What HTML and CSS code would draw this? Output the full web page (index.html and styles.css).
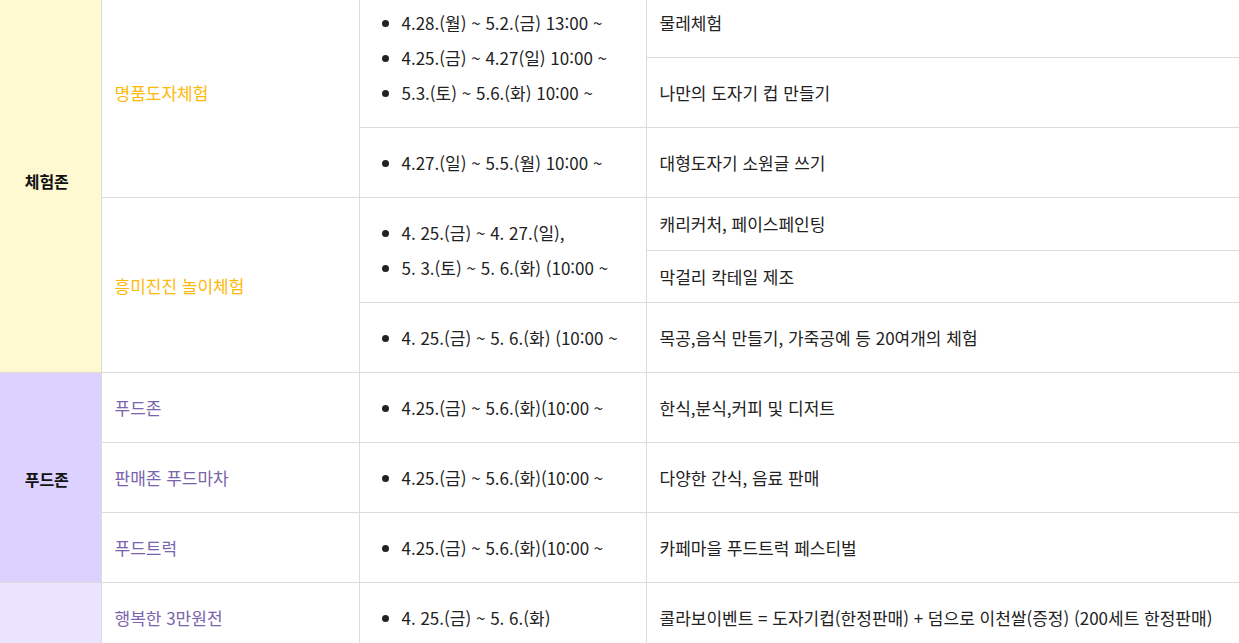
FILE: index.html
```html
<!DOCTYPE html>
<html lang="ko">
<head>
<meta charset="utf-8">
<link rel="stylesheet" href="styles.css">
</head>
<body>
<table class="sched">
  <colgroup>
    <col class="c1"><col class="c2"><col class="c3"><col class="c4">
  </colgroup>
  <tbody>
    <tr>
      <th rowspan="6" class="zone zone-exp">체험존</th>
      <td rowspan="3" class="prog prog-exp">명품도자체험</td>
      <td rowspan="2" class="dates"><ul><li>4.28.(월) ~ 5.2.(금) 13:00 ~</li><li>4.25.(금) ~ 4.27(일) 10:00 ~</li><li>5.3.(토) ~ 5.6.(화) 10:00 ~</li></ul></td>
      <td class="desc">물레체험</td>
    </tr>
    <tr><td class="desc">나만의 도자기 컵 만들기</td></tr>
    <tr>
      <td class="dates"><ul><li>4.27.(일) ~ 5.5.(월) 10:00 ~</li></ul></td>
      <td class="desc">대형도자기 소원글 쓰기</td>
    </tr>
    <tr>
      <td rowspan="3" class="prog prog-exp">흥미진진 놀이체험</td>
      <td rowspan="2" class="dates"><ul><li>4. 25.(금) ~ 4. 27.(일),</li><li>5. 3.(토) ~ 5. 6.(화) (10:00 ~</li></ul></td>
      <td class="desc">캐리커처, 페이스페인팅</td>
    </tr>
    <tr><td class="desc">막걸리 칵테일 제조</td></tr>
    <tr>
      <td class="dates"><ul><li>4. 25.(금) ~ 5. 6.(화) (10:00 ~</li></ul></td>
      <td class="desc">목공,음식 만들기, 가죽공예 등 20여개의 체험</td>
    </tr>
    <tr>
      <th rowspan="3" class="zone zone-food">푸드존</th>
      <td class="prog prog-food">푸드존</td>
      <td class="dates"><ul><li>4.25.(금) ~ 5.6.(화)(10:00 ~</li></ul></td>
      <td class="desc">한식,분식,커피 및 디저트</td>
    </tr>
    <tr>
      <td class="prog prog-food">판매존 푸드마차</td>
      <td class="dates"><ul><li>4.25.(금) ~ 5.6.(화)(10:00 ~</li></ul></td>
      <td class="desc">다양한 간식, 음료 판매</td>
    </tr>
    <tr>
      <td class="prog prog-food">푸드트럭</td>
      <td class="dates"><ul><li>4.25.(금) ~ 5.6.(화)(10:00 ~</li></ul></td>
      <td class="desc">카페마을 푸드트럭 페스티벌</td>
    </tr>
    <tr>
      <th class="zone zone-event"></th>
      <td class="prog prog-food">행복한 3만원전</td>
      <td class="dates"><ul><li>4. 25.(금) ~ 5. 6.(화)</li></ul></td>
      <td class="desc">콜라보이벤트 = 도자기컵(한정판매) + 덤으로 이천쌀(증정) (200세트 한정판매)</td>
    </tr>
  </tbody>
</table>
</body>
</html>
```

FILE: styles.css
```css
html, body {
  margin: 0;
  padding: 0;
  background: #fff;
}
body {
  font-family: "Noto Sans CJK KR", "Noto Sans", sans-serif;
  color: #222;
  overflow: hidden;
}
.sched {
  border-collapse: collapse;
  width: 1240px;
  margin-top: -13px;
  table-layout: fixed;
  font-size: 17px;
}
.c1 { width: 101px; }
.c2 { width: 258px; }
.c3 { width: 287px; }
.c4 { width: 594px; }
.sched th, .sched td {
  border: 1px solid #dcdcdc;
  vertical-align: middle;
  text-align: left;
}
.zone {
  text-align: center !important;
  font-size: 16px;
  font-weight: 700;
  color: #111;
  padding: 2px 7px 0 0;
  border-left: 0 !important;
}
.zone-exp { background: #fff9d1; }
.zone-food { background: #dcd1ff; }
.zone-event { background: #ebe4ff; }
.prog {
  padding: 1px 13px 0;
  line-height: 22px;
}
.prog-exp { color: #fcb90a; }
.prog-food { color: #7a64ad; }
.dates {
  padding: 17px 0 17px 0;
}
.dates ul {
  margin: 0;
  padding: 0 0 0 42px;
  list-style: disc;
}
.dates li {
  line-height: 35px;
}
.desc {
  padding: 15px 14px 14px 13px;
  line-height: 22px;
}
```
